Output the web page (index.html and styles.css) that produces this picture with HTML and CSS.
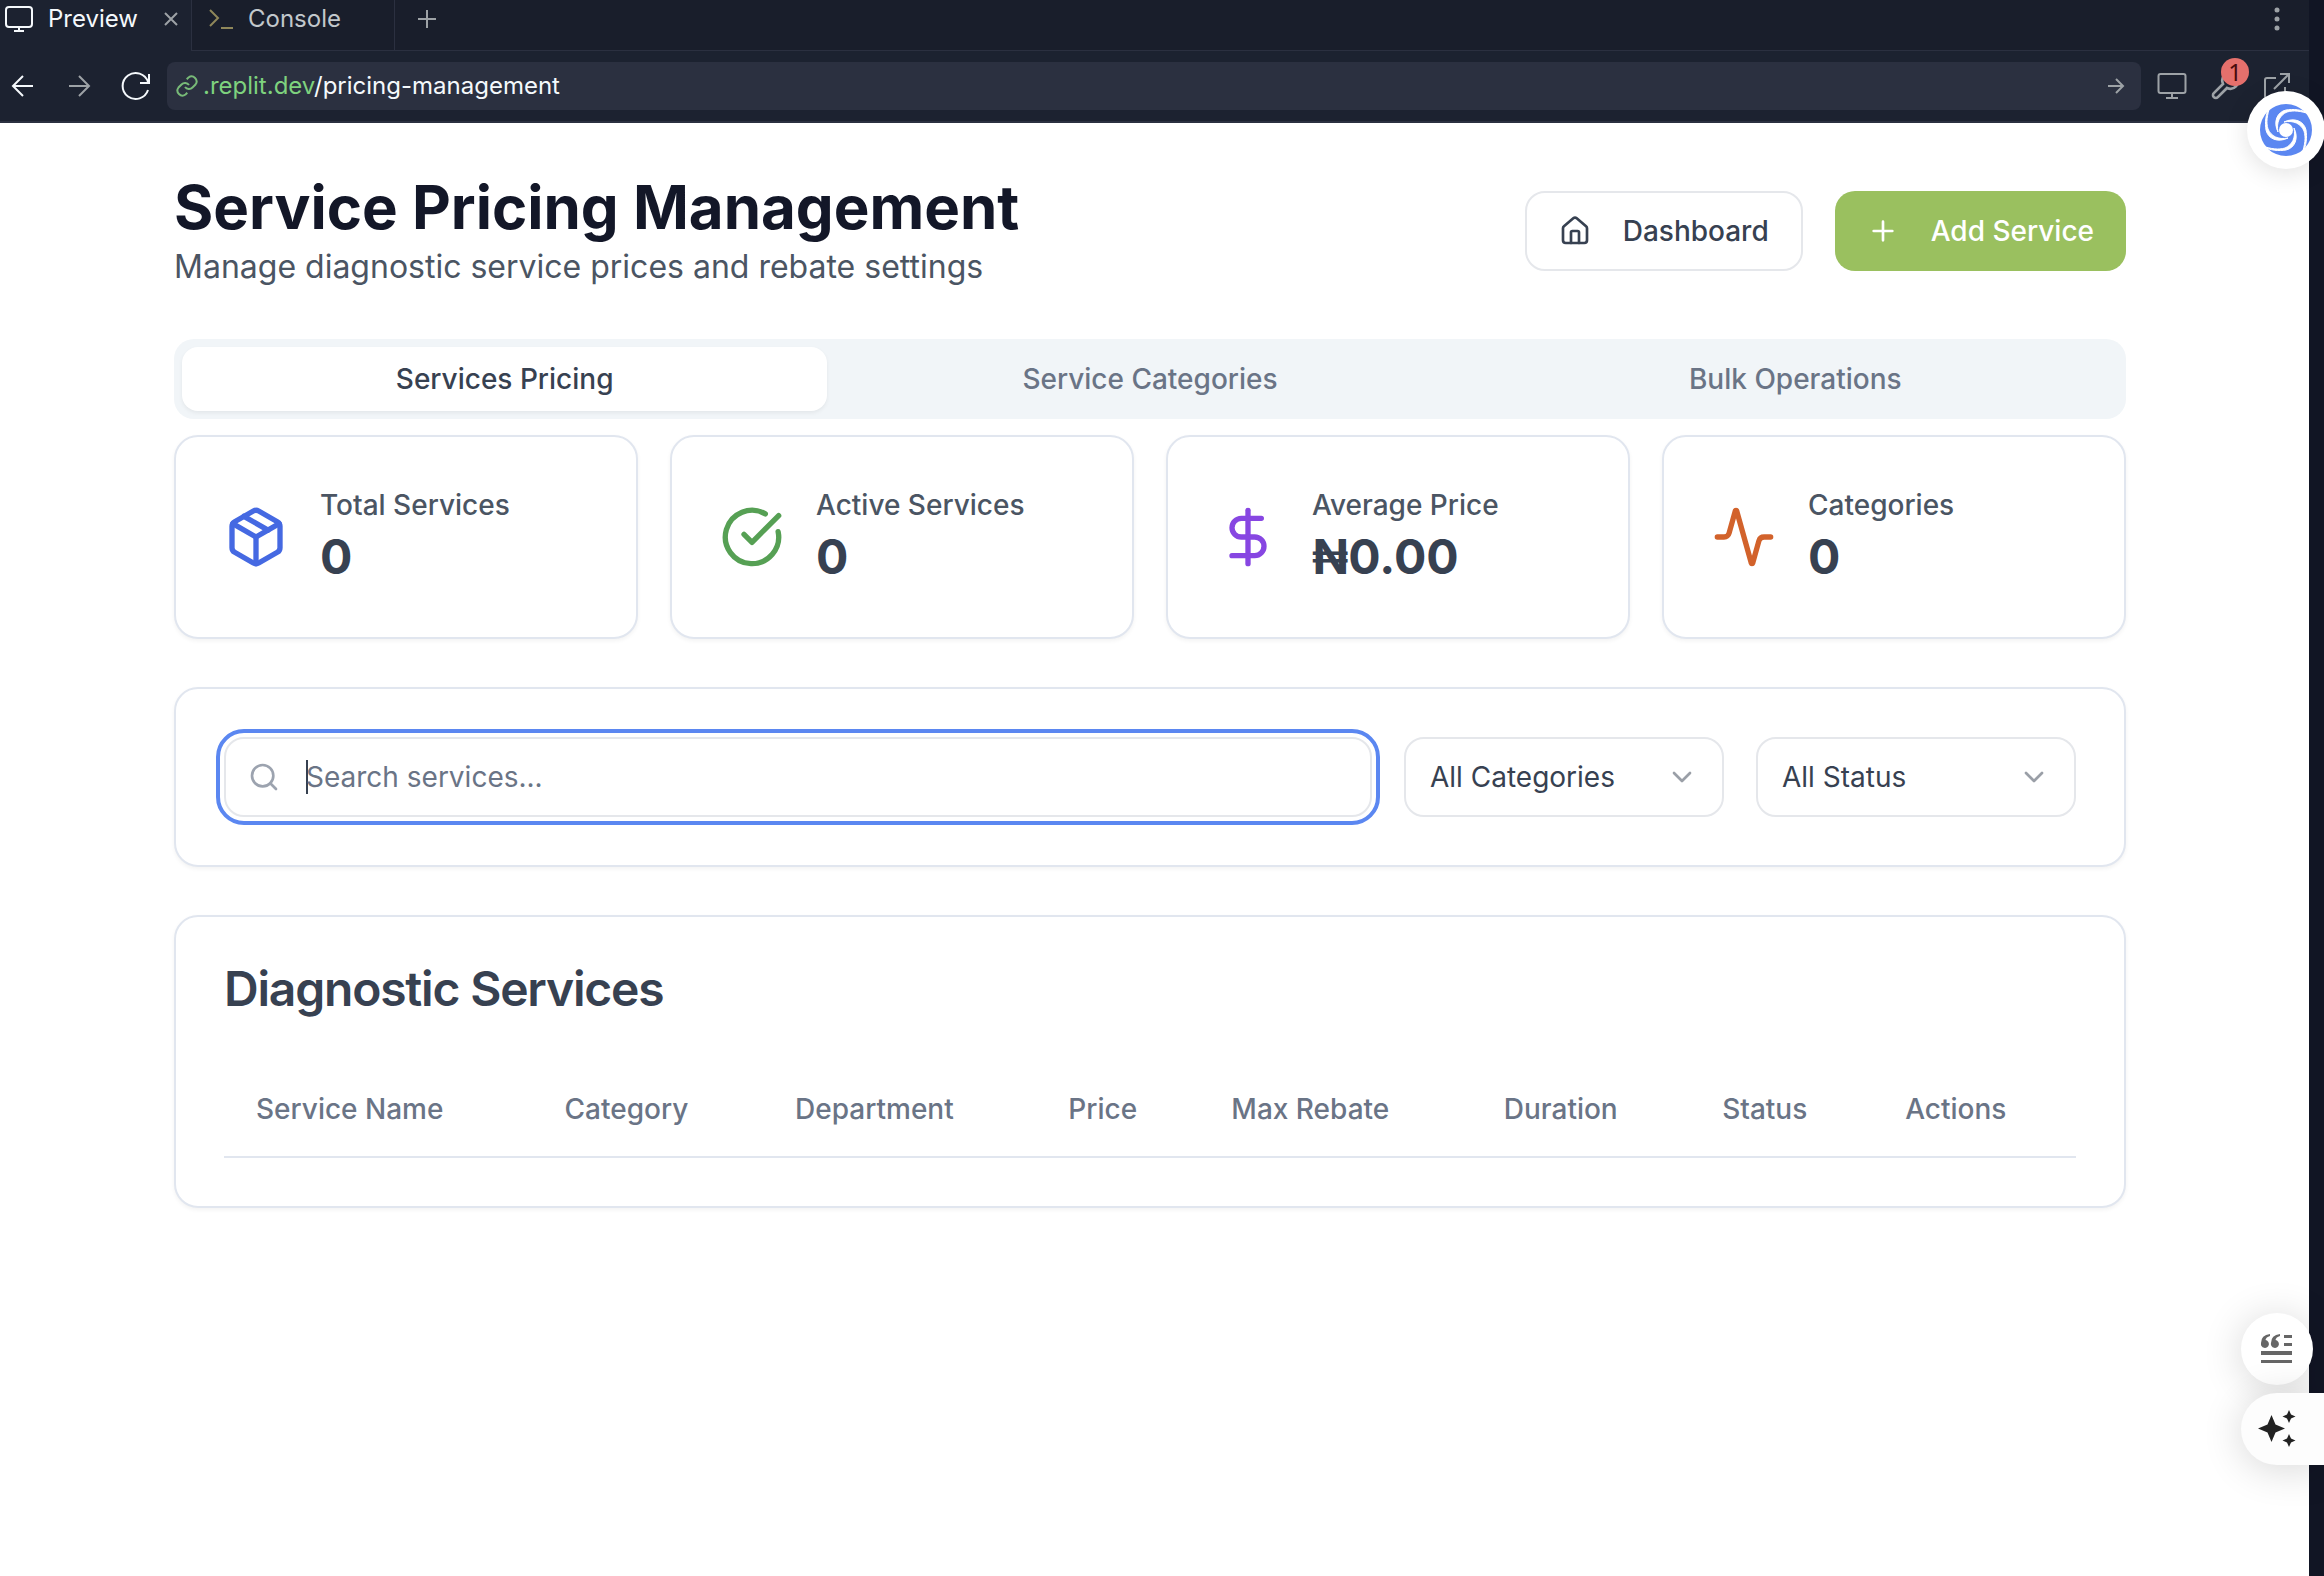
FILE: index.html
```html
<!DOCTYPE html>
<html lang="en">
<head>
<meta charset="utf-8">
<meta name="viewport" content="width=device-width, initial-scale=1">
<title>Service Pricing Management</title>
<link rel="stylesheet" href="styles.css">
</head>
<body>
<div class="workspace">
  <header class="chrome">
    <nav class="pane-tabs" aria-label="Panes">
      <div class="pane-tab is-active">
        <button class="pane-button" type="button">
          <svg class="icon icon-monitor" viewBox="0 0 30 28"><rect x="2" y="2" width="26" height="20" rx="3"/><path d="M15 22v4M10 26h10"/></svg>
          Preview
        </button>
        <button class="icon-button close" type="button" aria-label="Close tab"><svg class="icon" width="16" height="16" viewBox="0 0 16 16"><path d="M2 2l12 12M14 2L2 14"/></svg></button>
      </div>
      <div class="pane-tab">
        <button class="pane-button" type="button">
          <svg class="icon icon-prompt" viewBox="0 0 26 24"><path d="M2 3l8 8-8 8M13 21h12"/></svg>
          Console
        </button>
      </div>
      <div class="pane-rest">
        <button class="icon-button" type="button" aria-label="New tab"><svg class="icon" width="20" height="20" viewBox="0 0 20 20"><path d="M10 1v18M1 10h18"/></svg></button>
        <button class="icon-button dots" type="button" aria-label="Pane menu"><svg width="6" height="26" viewBox="0 0 6 26"><circle cx="3" cy="4" r="2.5"/><circle cx="3" cy="13" r="2.5"/><circle cx="3" cy="22" r="2.5"/></svg></button>
      </div>
    </nav>
    <div class="toolbar">
      <div class="history">
        <button class="icon-button bright" type="button" aria-label="Back"><svg class="icon" width="24" height="24" viewBox="0 0 24 24"><path d="M22 12H3M12 2L2 12l10 10"/></svg></button>
        <button class="icon-button" type="button" aria-label="Forward"><svg class="icon" width="24" height="24" viewBox="0 0 24 24"><path d="M2 12h19M12 2l10 10-10 10"/></svg></button>
        <button class="icon-button bright" type="button" aria-label="Reload"><svg class="icon" width="32" height="30" viewBox="0 0 32 30"><path d="M29 3v9h-9M28 11A13 13 0 1 0 28 19"/></svg></button>
      </div>
      <div class="address">
        <svg class="icon icon-link" viewBox="0 0 24 24"><path d="M10 13a5 5 0 0 0 7.5.5l3-3a5 5 0 0 0-7-7l-1.800 1.700M14 11a5 5 0 0 0-7.500-.500l-3 3a5 5 0 0 0 7 7l1.800-1.700"/></svg>
        <a class="url" href="/pricing-management"><span class="host">.replit.dev</span>/pricing-management</a>
        <button class="icon-button go" type="button" aria-label="Go"><svg class="icon" width="18" height="18" viewBox="0 0 18 18"><path d="M1 9h15M9 2l7 7-7 7"/></svg></button>
      </div>
      <div class="tools">
        <button class="icon-button" type="button" aria-label="Device size"><svg class="icon" width="30" height="28" viewBox="0 0 30 28"><rect x="1.500" y="2" width="27" height="19" rx="2"/><path d="M15 21v5M9 26h12"/></svg></button>
        <button class="icon-button wrench" type="button" aria-label="Developer tools, 1 error"><svg class="icon" width="32" height="32" viewBox="0 0 24 24"><path d="M14.700 6.300a1 1 0 0 0 0 1.400l1.600 1.600a1 1 0 0 0 1.400 0l3.770-3.770a6 6 0 0 1-7.940 7.940l-6.910 6.910a2.120 2.120 0 0 1-3-3l6.910-6.910a6 6 0 0 1 7.940-7.940z"/></svg><span class="badge">1</span></button>
        <button class="icon-button" type="button" aria-label="Open in new tab"><svg class="icon" width="28" height="28" viewBox="0 0 28 28"><path d="M13 6H4q-2 0-2 2v16q0 2 2 2h16q2 0 2-2V15M11 17L26 2M17 2h9v9"/></svg></button>
      </div>
    </div>
  </header>

  <main class="page">
    <div class="page-head">
      <div>
        <h1>Service Pricing Management</h1>
        <p class="subtitle">Manage diagnostic service prices and rebate settings</p>
      </div>
      <div class="actions">
        <button class="button outline" type="button">
          <svg class="icon-32" viewBox="0 0 24 24"><path d="M15 21v-8a1 1 0 0 0-1-1h-4a1 1 0 0 0-1 1v8"/><path d="M3 10a2 2 0 0 1 .709-1.528l7-5.999a2 2 0 0 1 2.582 0l7 5.999A2 2 0 0 1 21 10v9a2 2 0 0 1-2 2H5a2 2 0 0 1-2-2z"/></svg>
          Dashboard
        </button>
        <button class="button primary" type="button">
          <svg class="icon-32" viewBox="0 0 24 24"><path d="M5 12h14M12 5v14"/></svg>
          Add Service
        </button>
      </div>
    </div>

    <div class="tabs" role="tablist">
      <button class="tab is-active" type="button" role="tab" aria-selected="true">Services Pricing</button>
      <button class="tab" type="button" role="tab" aria-selected="false">Service Categories</button>
      <button class="tab" type="button" role="tab" aria-selected="false">Bulk Operations</button>
    </div>

    <section class="stats" aria-label="Summary">
      <div class="card stat">
        <svg class="icon-64 blue" viewBox="0 0 24 24"><path d="M11 21.730a2 2 0 0 0 2 0l7-4A2 2 0 0 0 21 16V8a2 2 0 0 0-1-1.730l-7-4a2 2 0 0 0-2 0l-7 4A2 2 0 0 0 3 8v8a2 2 0 0 0 1 1.730z"/><path d="M12 22V12"/><path d="M3.300 7L12 12l8.700-5"/><path d="m7.500 4.270 9 5.150"/></svg>
        <div><p class="stat-label">Total Services</p><p class="stat-value">0</p></div>
      </div>
      <div class="card stat">
        <svg class="icon-64 green" viewBox="0 0 24 24"><path d="M21.801 10A10 10 0 1 1 17 3.335"/><path d="m9 11 3 3L22 4"/></svg>
        <div><p class="stat-label">Active Services</p><p class="stat-value">0</p></div>
      </div>
      <div class="card stat">
        <svg class="icon-64 purple" viewBox="0 0 24 24"><path d="M12 2v20"/><path d="M17 5H9.500a3.500 3.500 0 0 0 0 7h5a3.500 3.500 0 0 1 0 7H6"/></svg>
        <div><p class="stat-label">Average Price</p><p class="stat-value">₦0.00</p></div>
      </div>
      <div class="card stat">
        <svg class="icon-64 orange" viewBox="0 0 24 24"><path d="M22 12h-2.480a2 2 0 0 0-1.930 1.460l-2.350 8.360a.25.25 0 0 1-.480 0L9.240 2.180a.25.25 0 0 0-.480 0l-2.350 8.360A2 2 0 0 1 4.490 12H2"/></svg>
        <div><p class="stat-label">Categories</p><p class="stat-value">0</p></div>
      </div>
    </section>

    <section class="card filters" aria-label="Filters">
      <label class="search">
        <svg class="icon-32" viewBox="0 0 24 24"><circle cx="11" cy="11" r="8"/><path d="m21 21-4.300-4.300"/></svg>
        <span class="caret"></span>
        <input type="text" placeholder="Search services..." aria-label="Search services">
      </label>
      <div class="select">
        <select aria-label="Category"><option>All Categories</option></select>
        <svg class="icon-32" viewBox="0 0 24 24"><path d="m6 9 6 6 6-6"/></svg>
      </div>
      <div class="select">
        <select aria-label="Status"><option>All Status</option></select>
        <svg class="icon-32" viewBox="0 0 24 24"><path d="m6 9 6 6 6-6"/></svg>
      </div>
    </section>

    <section class="card services">
      <h2>Diagnostic Services</h2>
      <table>
        <thead>
          <tr><th scope="col">Service Name</th><th scope="col">Category</th><th scope="col">Department</th><th scope="col">Price</th><th scope="col">Max Rebate</th><th scope="col">Duration</th><th scope="col">Status</th><th scope="col">Actions</th></tr>
        </thead>
        <tbody></tbody>
      </table>
    </section>
  </main>
</div>

<button class="float float-swirl" type="button" aria-label="Assistant">
  <svg width="54" height="54" viewBox="-27 -27 54 54">
    <circle r="26" fill="#5b87f1"/>
    <g fill="#fff" stroke="#fff" stroke-width="1">
      <path id="arm" d="M24 -16C15 -21 7 -21 0 -20C-9 -18 -13 -8 -8 2C-10 -8 -6 -15 1 -18C8 -20 14 -19 24 -16z"/>
      <use href="#arm" transform="rotate(90)"/><use href="#arm" transform="rotate(180)"/><use href="#arm" transform="rotate(270)"/>
    </g>
    <circle r="7" fill="#fff"/>
  </svg>
</button>
<div class="float-stack">
  <button class="float float-quote" type="button" aria-label="Summarise">
    <svg width="32" height="30" viewBox="0 0 32 30" fill="#666"><path d="M9 0v2Q5 3 4.500 6A4 4 0 1 1 0 9Q0 1 9 0zM19 0v2Q15 3 14.500 6A4 4 0 1 1 10 9Q10 1 19 0zM23 1h8v3h-8zM23 9h8v3h-8zM0 17h31v4H0zM0 26h31v3H0z"/></svg>
  </button>
  <button class="float float-sparkle" type="button" aria-label="Generate">
    <svg width="38" height="38" viewBox="0 0 38 38" fill="#222"><path d="M13.500 5l4 9.500 9.500 4-9.500 4-4 9.500-4-9.500-9.500-4 9.500-4zM31 0l2 4.500 4.500 2-4.500 2-2 4.500-2-4.500-4.500-2 4.500-2zM31 24l2 4.500 4.500 2-4.500 2-2 4.500-2-4.500-4.500-2 4.500-2z"/></svg>
  </button>
</div>
</body>
</html>
```
FILE: styles.css
```css
* { box-sizing: border-box; margin: 0; }

body {
  min-height: 100vh;
  padding-right: 15px;
  background: #111524;
  color: #374151;
  font-family: Inter, "Liberation Sans", sans-serif;
  font-size: 28px;
  line-height: 40px;
}

button, input, select { font: inherit; color: inherit; }
button { padding: 0; border: 0; background: none; cursor: pointer; }
svg { display: block; flex: none; }

.workspace { display: flex; flex-direction: column; min-height: 100vh; background: #fff; }

/* Browser chrome */
.chrome {
  background: #1c2230;
  border-bottom: 2px solid #2b3040;
  color: #c2c8cc;
  font-size: 24px;
  line-height: 32px;
}
.icon { fill: none; stroke: currentColor; stroke-width: 2; }
.icon-button { display: flex; align-items: center; justify-content: center; color: #9da2a6; }
.bright { color: #f5f9fc; }

.pane-tabs { display: flex; height: 51px; }
.pane-tab {
  display: flex;
  align-items: center;
  width: 203px;
  padding: 0 0 12px 16px;
  border: solid #2b3040;
  border-width: 0 1px 1px 0;
  background: #191e2b;
}
.pane-tab.is-active {
  justify-content: space-between;
  width: 192px;
  padding: 0 12px 13px 4px;
  border-bottom: 0;
  background: #1c2230;
  color: #f5f9fc;
}
.pane-button { display: flex; align-items: center; gap: 14px; }
.icon-monitor { width: 30px; height: 34px; }
.icon-prompt { width: 26px; height: 24px; color: #8f875a; }
.pane-rest {
  display: flex;
  flex: 1;
  align-items: center;
  justify-content: space-between;
  padding: 0 29px 12px 22px;
  border-bottom: 1px solid #2b3040;
  background: #191e2b;
}
.dots { fill: #9da2a6; }

.toolbar { display: flex; align-items: center; height: 70px; padding: 0 18px 0 11px; }
.history { display: flex; align-items: center; gap: 32px; width: 156px; }
.history .icon-button:last-child { margin-left: -3px; }
.address {
  display: flex;
  flex: 1;
  align-items: center;
  gap: 4px;
  height: 48px;
  padding: 0 16px 0 8px;
  border-radius: 8px;
  background: #2b3040;
}
.icon-link { width: 24px; height: 24px; color: #78ba78; }
.url { flex: 1; color: #f5f9fc; text-decoration: none; }
.host { color: #7ed27e; }
.tools { display: flex; align-items: center; gap: 22px; padding-left: 16px; }
.wrench { position: relative; }
.badge {
  position: absolute;
  top: -12px;
  right: -8px;
  width: 28px;
  height: 28px;
  border-radius: 14px;
  background: #e5706c;
  color: #4a0c0c;
  font-family: "Noto Sans", sans-serif;
  line-height: 28px;
}

/* Page */
.page { padding: 48px 183px 48px 174px; }
.page-head { display: flex; align-items: center; justify-content: space-between; margin-bottom: 48px; }
h1 { color: #131728; font-size: 60px; font-weight: 700; line-height: 72px; }
.subtitle { color: #4b5563; font-size: 32px; line-height: 48px; }
.actions { display: flex; gap: 32px; }
.button {
  display: flex;
  align-items: center;
  gap: 32px;
  height: 80px;
  padding: 0 32px;
  border-radius: 20px;
  font-weight: 500;
}
.outline { border: 2px solid #e5e7eb; background: #fff; }
.primary { background: #9ac05f; color: #fff; }

.icon-32, .icon-64 { fill: none; stroke: currentColor; stroke-width: 2; stroke-linecap: round; stroke-linejoin: round; }
.icon-32 { width: 32px; height: 32px; }
.icon-64 { width: 64px; height: 64px; }

.tabs {
  display: grid;
  grid-template-columns: repeat(3, 1fr);
  height: 80px;
  margin-bottom: 16px;
  padding: 8px;
  border-radius: 20px;
  background: #f1f5f8;
}
.tab { border-radius: 16px; color: #6a7486; font-weight: 500; }
.tab.is-active { background: #fff; color: #374151; box-shadow: 0 2px 4px rgba(0, 0, 0, 0.06); }

.card {
  margin-bottom: 48px;
  padding: 48px;
  border: 2px solid #e1e6ef;
  border-radius: 24px;
  background: #fff;
  box-shadow: 0 2px 4px rgba(0, 0, 0, 0.05);
}

.stats { display: grid; grid-template-columns: repeat(4, 1fr); gap: 32px; margin-bottom: 48px; }
.stat { display: flex; align-items: center; gap: 32px; margin: 0; }
.stat-label { color: #4b5563; font-weight: 500; }
.stat-value { font-size: 48px; font-weight: 700; line-height: 64px; }
.blue { color: #4569e2; }
.green { color: #56a054; }
.purple { color: #8746e2; }
.orange { color: #d2622b; }

.filters { display: flex; gap: 32px; }
.search, .select {
  display: flex;
  align-items: center;
  position: relative;
  height: 80px;
  border: 2px solid #e5e7eb;
  border-radius: 20px;
}
.search { flex: 1; padding-left: 22px; color: #9ca3af; outline: 4px solid #5b87f1; outline-offset: 4px; }
.search input { flex: 1; min-width: 0; padding: 0; border: 0; outline: 0; background: none; color: #374151; }
.search input::placeholder { color: #6a7486; opacity: 1; }
.caret { width: 2px; height: 34px; margin: 0 -2px 0 26px; background: #374151; }
.select { width: 320px; }
.select select {
  width: 100%;
  height: 100%;
  padding: 0 64px 0 24px;
  border: 0;
  border-radius: 18px;
  appearance: none;
  background: none;
}
.select svg { position: absolute; right: 24px; opacity: 0.5; pointer-events: none; }

h2 { margin-bottom: 48px; font-size: 48px; font-weight: 600; line-height: 48px; letter-spacing: -0.025em; }
table { width: 100%; border-collapse: collapse; }
th {
  height: 96px;
  padding: 0 32px;
  border-bottom: 2px solid #e1e6ef;
  color: #6a7486;
  font-weight: 500;
  text-align: left;
}

/* Extension buttons floating over the page edge */
.float {
  display: flex;
  align-items: center;
  justify-content: center;
  background: #fff;
  box-shadow: 0 4px 24px rgba(0, 0, 0, 0.12);
}
.float-swirl { position: fixed; top: 91px; right: -1px; width: 78px; height: 78px; border-radius: 39px; }
.float-stack { position: fixed; top: 1313px; right: 0; display: flex; flex-direction: column; gap: 8px; }
.float-quote { width: 72px; height: 72px; border-radius: 36px; box-shadow: 0 4px 40px rgba(0, 0, 0, 0.16); }
.float-sparkle {
  justify-content: flex-start;
  width: 83px;
  height: 72px;
  padding-left: 17px;
  border-radius: 36px 0 0 36px;
  background: #fdfdfd;
  box-shadow: 0 4px 40px rgba(0, 0, 0, 0.16);
}
```
